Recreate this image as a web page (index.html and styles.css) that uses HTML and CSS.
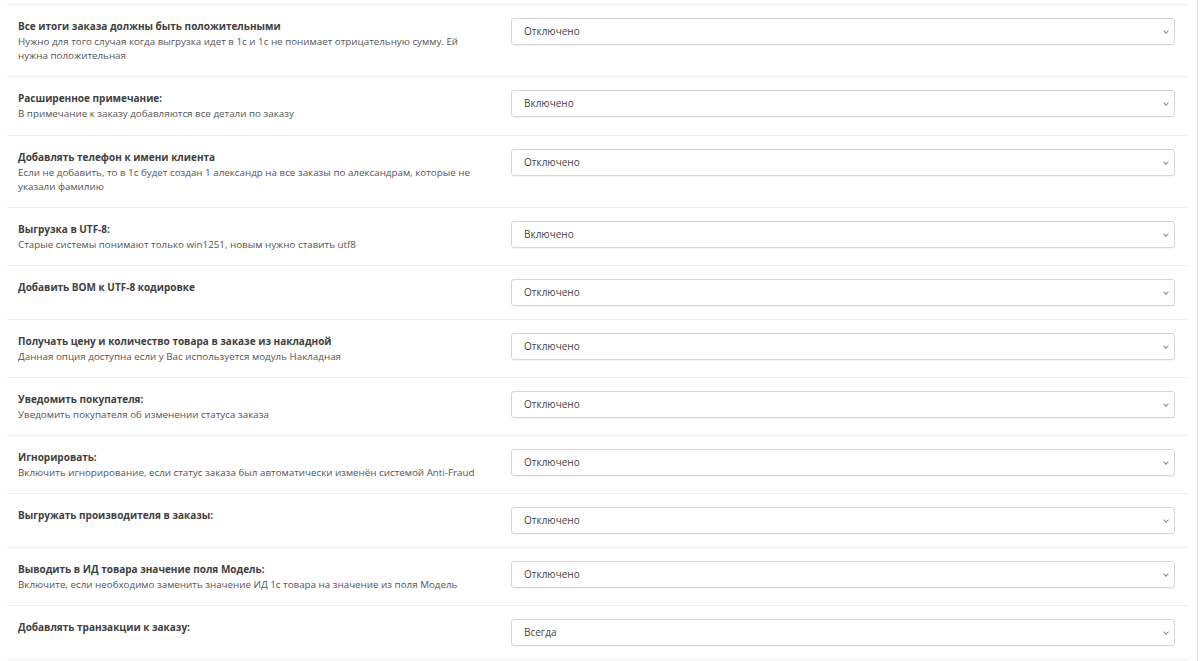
FILE: index.html
```html
<!DOCTYPE html>
<html lang="ru">
<head>
    <meta charset="UTF-8">
    <meta name="viewport" content="width=device-width, initial-scale=1.0">
    <title>Настройки выгрузки заказов</title>
    <link rel="stylesheet" href="styles.css">
</head>
<body>

<div class="page">
    <div class="settings">
        <div class="setting">
            <div class="setting-info">
                <div class="setting-title">Все итоги заказа должны быть положительными</div>
                <div class="setting-desc">Нужно для того случая когда выгрузка идет в 1с и 1с не понимает отрицательную сумму. Ей нужна положительная</div>
            </div>
            <div class="select">Отключено</div>
        </div>
        <div class="setting">
            <div class="setting-info">
                <div class="setting-title">Расширенное примечание:</div>
                <div class="setting-desc">В примечание к заказу добавляются все детали по заказу</div>
            </div>
            <div class="select">Включено</div>
        </div>
        <div class="setting">
            <div class="setting-info">
                <div class="setting-title">Добавлять телефон к имени клиента</div>
                <div class="setting-desc">Если не добавить, то в 1с будет создан 1 александр на все заказы по александрам, которые не указали фамилию</div>
            </div>
            <div class="select">Отключено</div>
        </div>
        <div class="setting">
            <div class="setting-info">
                <div class="setting-title">Выгрузка в UTF-8:</div>
                <div class="setting-desc">Старые системы понимают только win1251, новым нужно ставить utf8</div>
            </div>
            <div class="select">Включено</div>
        </div>
        <div class="setting">
            <div class="setting-info">
                <div class="setting-title">Добавить BOM к UTF-8 кодировке</div>
            </div>
            <div class="select">Отключено</div>
        </div>
        <div class="setting">
            <div class="setting-info">
                <div class="setting-title">Получать цену и количество товара в заказе из накладной</div>
                <div class="setting-desc">Данная опция доступна если у Вас используется модуль Накладная</div>
            </div>
            <div class="select">Отключено</div>
        </div>
        <div class="setting">
            <div class="setting-info">
                <div class="setting-title">Уведомить покупателя:</div>
                <div class="setting-desc">Уведомить покупателя об изменении статуса заказа</div>
            </div>
            <div class="select">Отключено</div>
        </div>
        <div class="setting">
            <div class="setting-info">
                <div class="setting-title">Игнорировать:</div>
                <div class="setting-desc">Включить игнорирование, если статус заказа был автоматически изменён системой Anti-Fraud</div>
            </div>
            <div class="select">Отключено</div>
        </div>
        <div class="setting">
            <div class="setting-info">
                <div class="setting-title">Выгружать производителя в заказы:</div>
            </div>
            <div class="select">Отключено</div>
        </div>
        <div class="setting">
            <div class="setting-info">
                <div class="setting-title">Выводить в ИД товара значение поля Модель:</div>
                <div class="setting-desc">Включите, если необходимо заменить значение ИД 1с товара на значение из поля Модель</div>
            </div>
            <div class="select">Отключено</div>
        </div>
        <div class="setting">
            <div class="setting-info">
                <div class="setting-title">Добавлять транзакции к заказу:</div>
            </div>
            <div class="select">Всегда</div>
        </div>
    </div>
</div>

</body>
</html>
```

FILE: styles.css
```css
html, body {
    margin: 0;
    padding: 0;
    background-color: #fff;
}

body {
    font-family: "Open Sans", "Noto Sans", sans-serif;
    color: #333;
    overflow: hidden;
}

.page {
    width: 1198px;
    height: 661px;
    border-right: 1px solid #e2e2e2;
    padding: 4px 9px 0 7px;
    box-sizing: border-box;
}

.setting {
    display: grid;
    grid-template-columns: 466px 1fr;
    column-gap: 27px;
    align-items: start;
    padding: 13px 13px 13px 11px;
    border-top: 1px solid #eeeeee;
}

.setting:nth-child(2) {
    padding-bottom: 14px;
}

.setting:last-child {
    border-bottom: 1px solid #eeeeee;
}

.setting-title {
    font-size: 10px;
    font-weight: bold;
    line-height: 16px;
    margin-bottom: 1px;
    color: #404040;
}

.setting-desc {
    font-size: 9.8px;
    line-height: 14px;
    color: #555;
}

.select {
    position: relative;
    height: 27px;
    line-height: 25px;
    padding: 0 12px;
    font-size: 10px;
    color: #444;
    border: 1px solid #d6d6d6;
    border-radius: 3px;
    box-shadow: 0 1px 1px rgba(0, 0, 0, 0.04);
    box-sizing: border-box;
}

.select::after {
    content: "";
    position: absolute;
    right: 6px;
    top: 10px;
    width: 3px;
    height: 3px;
    border-right: 1px solid #8a8a8a;
    border-bottom: 1px solid #8a8a8a;
    transform: rotate(45deg);
}
```
